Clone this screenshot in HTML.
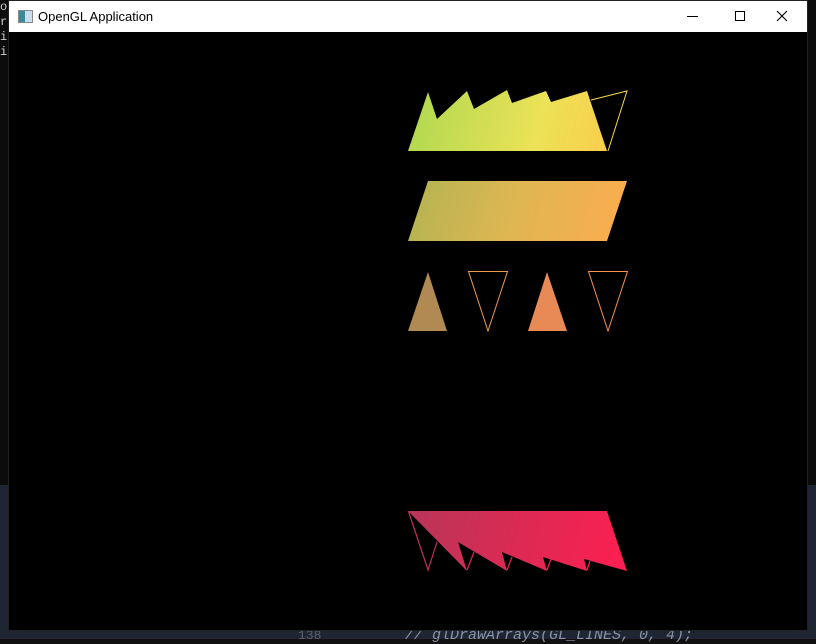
<!DOCTYPE html>
<html><head><style>
html,body{margin:0;padding:0;width:816px;height:639px;overflow:hidden;background:#111;}
#bgtop{position:absolute;left:0;top:0;width:816px;height:485px;background:#0c0c0c;}
#bgbot{position:absolute;left:0;top:485px;width:816px;height:154px;background:#1f2532;}
#console{position:absolute;left:0;top:0;font:12px "Liberation Mono",monospace;color:#ccc;line-height:15px;}
#bottomtxt{position:absolute;top:627px;left:405px;font:italic 15px "Liberation Mono",monospace;color:#8a93a8;}
#ln{position:absolute;top:628px;left:298px;font:13px "Liberation Mono",monospace;color:#5a6070;}
#win{position:absolute;left:8px;top:0;width:800px;height:631px;background:#000;border:1px solid #222;box-sizing:border-box;}
#title{position:absolute;left:0;top:0;width:100%;height:31px;background:#fff;}
#title .t{position:absolute;left:29px;top:8px;font:13px "Liberation Sans",sans-serif;color:#000;}
#icon{position:absolute;left:9px;top:9px;width:13px;height:11px;border:1px solid #888;background:linear-gradient(90deg,#3a8a9a 0 45%,#cde 45%);}
</style></head><body>
<div id="bgtop"></div><div id="bgbot"></div>
<div id="console">o<br>r<br>i<br>i</div>
<div id="ln">138</div>
<div id="bottomtxt">// glDrawArrays(GL_LINES, 0, 4);</div>
<div id="win">
<div id="title"><div id="icon"></div><div class="t">OpenGL Application</div>
<svg style="position:absolute;left:0;top:0" width="800" height="31">
<line x1="678" y1="15.5" x2="689" y2="15.5" stroke="#000" stroke-width="1"/>
<rect x="726.5" y="10.5" width="9" height="9" fill="none" stroke="#000"/>
<path d="M768 10 L778 20 M778 10 L768 20" stroke="#000" stroke-width="1.1"/>
</svg></div>
</div>
<svg style="position:absolute;left:0;top:0" width="816" height="639">
<defs>
<linearGradient id="g1" gradientUnits="userSpaceOnUse" x1="408" y1="91" x2="627" y2="151"><stop offset="0" stop-color="#acd850"/><stop offset="0.6" stop-color="#ece257"/><stop offset="1" stop-color="#fdc848"/></linearGradient>
<linearGradient id="g2" gradientUnits="userSpaceOnUse" x1="408" y1="181" x2="627" y2="241"><stop offset="0" stop-color="#b2b452"/><stop offset="0.5" stop-color="#e0b652"/><stop offset="1" stop-color="#fdac4e"/></linearGradient>
<linearGradient id="g4" gradientUnits="userSpaceOnUse" x1="408" y1="511" x2="627" y2="571"><stop offset="0" stop-color="#b83658"/><stop offset="1" stop-color="#ff1e50"/></linearGradient>
</defs>
<polygon fill="url(#g1)" points="408,151 428,92 437,119 467,91 474,109 507,90 512,103 546,91 551,102 587,91 607,151"/>
<polyline fill="none" stroke="#f8d84a" stroke-width="1" points="591,100 627,91 608,151"/>
<polygon fill="url(#g2)" points="428,181 627,181 607,241 408,241"/>
<polygon fill="#b08a52" points="408,331 428,272 447,331"/>
<polygon fill="none" stroke="#f09a4e" stroke-width="1" points="468.5,271.5 507.5,271.5 488,331"/>
<polygon fill="#e88a56" points="528,331 547,272 567,331"/>
<polygon fill="none" stroke="#f8904e" stroke-width="1" points="588.5,271.5 627.5,271.5 608,331"/>
<polygon fill="url(#g4)" points="408,511 607,511 627,571 584,559 587,571 543,557 547,571 502,552 507,571 458,542 467,571"/>
<polyline fill="none" stroke="#c03058" stroke-width="1.2" points="408.5,511.5 428,570 437,542"/>
<polyline fill="none" stroke="#d8285a" stroke-width="1.2" points="467,570 474,552"/>
<polyline fill="none" stroke="#e82456" stroke-width="1.2" points="507,570 512,557"/>
<polyline fill="none" stroke="#f42254" stroke-width="1.2" points="547,570 551,559"/>
<polyline fill="none" stroke="#fa2052" stroke-width="1.2" points="587,570 590,561"/>
</svg>
</body></html>
